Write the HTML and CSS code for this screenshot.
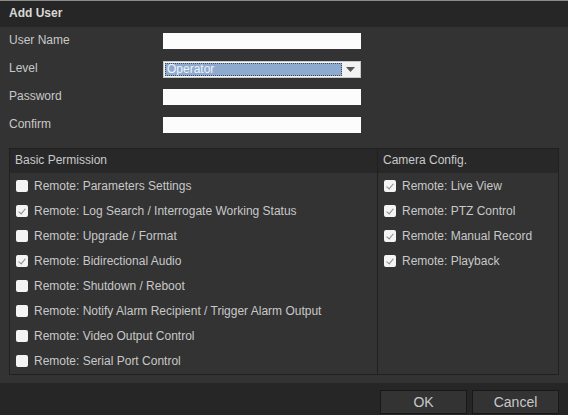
FILE: index.html
```html
<!DOCTYPE html>
<html>
<head>
<meta charset="utf-8">
<link rel="stylesheet" href="styles.css">
</head>
<body>
<div class="dialog">
  <div class="title">Add User</div>
  <div class="body">
    <div class="form">
      <div class="row"><span class="label">User Name</span><span class="input"></span></div>
      <div class="row"><span class="label">Level</span>
        <span class="select"><span class="sel-text">Operator</span><span class="sel-btn"><svg width="9" height="5" viewBox="0 0 9 5"><path d="M0 0h9L4.5 5z" fill="#555"/></svg></span></span>
      </div>
      <div class="row"><span class="label">Password</span><span class="input"></span></div>
      <div class="row"><span class="label">Confirm</span><span class="input"></span></div>
    </div>
    <div class="perm">
      <div class="col left">
        <div class="head">Basic Permission</div>
        <div class="item"><span class="cb"></span>Remote: Parameters Settings</div>
        <div class="item"><span class="cb on"></span>Remote: Log Search / Interrogate Working Status</div>
        <div class="item"><span class="cb"></span>Remote: Upgrade / Format</div>
        <div class="item"><span class="cb on"></span>Remote: Bidirectional Audio</div>
        <div class="item"><span class="cb"></span>Remote: Shutdown / Reboot</div>
        <div class="item"><span class="cb"></span>Remote: Notify Alarm Recipient / Trigger Alarm Output</div>
        <div class="item"><span class="cb"></span>Remote: Video Output Control</div>
        <div class="item"><span class="cb"></span>Remote: Serial Port Control</div>
      </div>
      <div class="col right">
        <div class="head">Camera Config.</div>
        <div class="item"><span class="cb on"></span>Remote: Live View</div>
        <div class="item"><span class="cb on"></span>Remote: PTZ Control</div>
        <div class="item"><span class="cb on"></span>Remote: Manual Record</div>
        <div class="item"><span class="cb on"></span>Remote: Playback</div>
      </div>
    </div>
  </div>
  <div class="footer">
    <button class="btn">OK</button>
    <button class="btn">Cancel</button>
  </div>
</div>
</body>
</html>
```
FILE: styles.css
```css
* { box-sizing: border-box; }
html, body { margin: 0; padding: 0; background: #262626; }
body { font-family: "Liberation Sans", Arial, sans-serif; font-size: 12px; color: #c8c8c8; }
.dialog { width: 568px; height: 415px; display: flex; flex-direction: column; border-top: 1px solid #8a8a8a; background: #333333; }
.title { height: 26px; background: #262626; color: #d8d8d8; font-weight: bold; padding-left: 9px; line-height: 24px; }
.body { flex: 1; background: #333333; padding: 0 9px 0 9px; }
.form { padding-top: 6px; }
.row { height: 28px; display: flex; align-items: flex-start; }
.label { width: 154px; line-height: 14px; }
.input { width: 198px; height: 16px; background: #fcfcfc; }
.select { width: 198px; height: 17px; background: #f4f4f4; border: 1px solid #c8c8c8; display: flex; padding: 1px; }
.sel-text { flex: 1; background: #8eaacf; color: #eef3fa; line-height: 13px; padding-left: 2px; outline: 1px dotted #3a4a60; outline-offset: -1px; }
.sel-btn { width: 17px; display: flex; align-items: center; justify-content: center; background: #f2f2f2; }
.perm { margin-top: 3px; height: 227px; border: 1px solid #202020; display: flex; background: #333; }
.col { display: flex; flex-direction: column; }
.left { width: 368px; border-right: 1px solid #202020; }
.right { flex: 1; }
.head { height: 24px; background: #282828; line-height: 22px; padding-left: 5px; color: #c8c8c8; }
.item { height: 25px; display: flex; align-items: center; padding-left: 6px; }
.cb { width: 12px; height: 12px; border-radius: 2px; background: #f4f4f4; margin-right: 6px; position: relative; }
.cb.on::after { content: ""; position: absolute; left: 4px; top: 2px; width: 3px; height: 6px; border: solid #8a8a8a; border-width: 0 1.5px 1.5px 0; transform: rotate(40deg); }
.footer { height: 32px; background: #262626; display: flex; justify-content: flex-end; align-items: flex-end; gap: 5px; padding: 0 9px 1px 0; }
.btn { width: 87px; height: 24px; background: #333333; border: 1px solid #181818; color: #c8c8c8; font-family: "Liberation Sans", Arial, sans-serif; font-size: 14px; padding: 0; }
```
